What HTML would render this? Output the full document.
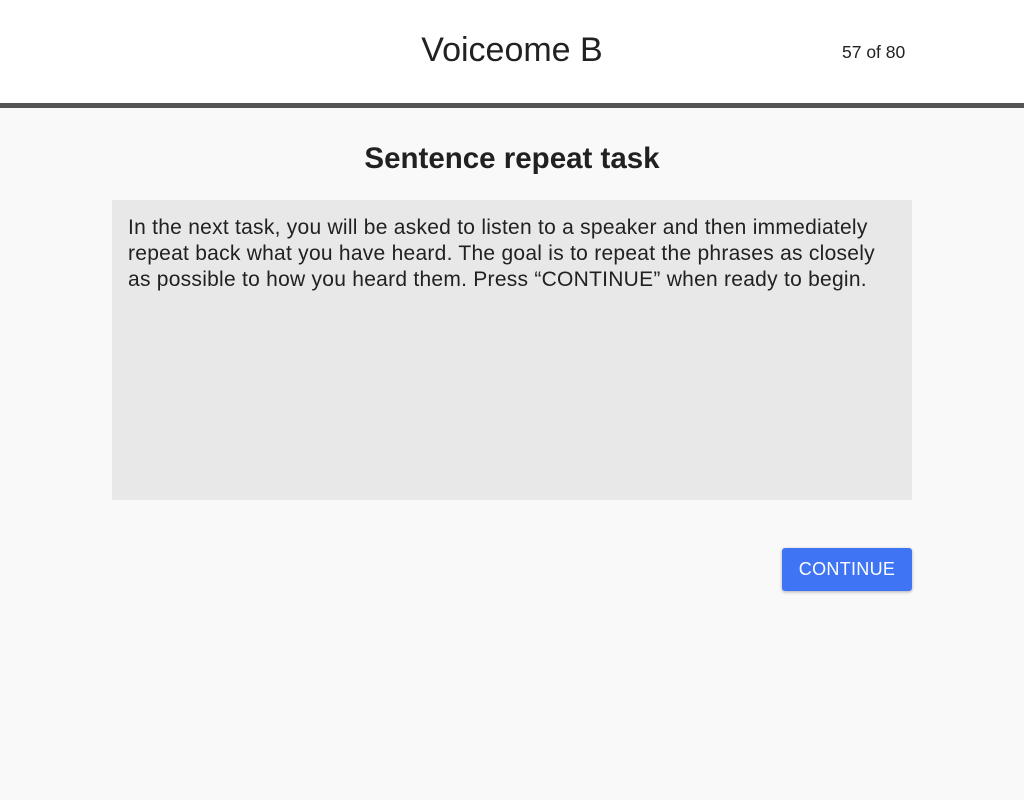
<!DOCTYPE html>
<html><head><meta charset="utf-8"><style>
html,body{margin:0;padding:0;width:1024px;height:800px;background:#f9f9f9;font-family:"Liberation Sans",sans-serif;color:#212121;overflow:hidden}
.hdr{position:absolute;top:0;left:0;width:1024px;height:103px;background:#fff;border-bottom:5px solid #555}
.title{position:absolute;top:31px;left:0;width:1024px;text-align:center;font-size:34px}
.cnt{position:absolute;top:42px;left:842px;font-size:17.5px}
h1{position:absolute;top:142px;left:0;width:1024px;text-align:center;font-size:29.5px;font-weight:bold;margin:0}
.box{position:absolute;top:200px;left:112px;width:800px;height:300px;background:#e8e8e8;box-sizing:border-box;padding:15px 16px;font-size:21px;line-height:26px;letter-spacing:0.26px;white-space:nowrap}
.btn{position:absolute;top:548px;left:782px;width:130px;height:43px;background:#3f74f5;color:#fff;border-radius:3px;font-size:18px;line-height:43px;text-align:center;box-shadow:0 1px 3px rgba(0,0,0,.3);letter-spacing:.3px}
</style></head><body>
<div class="hdr"><div class="title">Voiceome B</div><div class="cnt">57 of 80</div></div>
<h1>Sentence repeat task</h1>
<div class="box">In the next task, you will be asked to listen to a speaker and then immediately<br>repeat back what you have heard. The goal is to repeat the phrases as closely<br>as possible to how you heard them. Press “CONTINUE” when ready to begin.</div>
<div class="btn">CONTINUE</div>
</body></html>
